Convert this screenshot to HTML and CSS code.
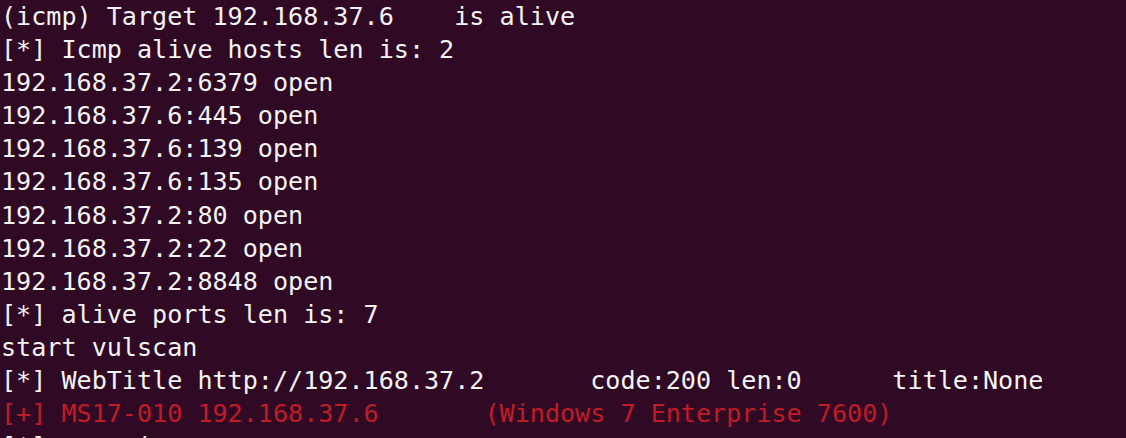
FILE: index.html
```html
<!DOCTYPE html>
<html lang="en">
<head>
<meta charset="utf-8">
<title>Terminal</title>
<link rel="stylesheet" href="styles.css">
</head>
<body>
<main class="terminal">
<div class="line">(icmp) Target 192.168.37.6    is alive</div>
<div class="line">[*] Icmp alive hosts len is: 2</div>
<div class="line">192.168.37.2:6379 open</div>
<div class="line">192.168.37.6:445 open</div>
<div class="line">192.168.37.6:139 open</div>
<div class="line">192.168.37.6:135 open</div>
<div class="line">192.168.37.2:80 open</div>
<div class="line">192.168.37.2:22 open</div>
<div class="line">192.168.37.2:8848 open</div>
<div class="line">[*] alive ports len is: 7</div>
<div class="line">start vulscan</div>
<div class="line">[*] WebTitle http://192.168.37.2       code:200 len:0      title:None</div>
<div class="line red">[+] MS17-010 192.168.37.6       (Windows 7 Enterprise 7600)</div>
<div class="line">[*] scan is over</div>
</main>
</body>
</html>
```
FILE: styles.css
```css
html, body {
  margin: 0;
  padding: 0;
  background: #300a24;
  overflow: hidden;
}
.terminal {
  width: 1126px;
  height: 438px;
  overflow: hidden;
  padding: 0 0 0 1px;
  box-sizing: border-box;
  font-family: "DejaVu Sans Mono", "Liberation Mono", monospace;
  font-size: 25.1px;
  line-height: 33.1px;
  color: #f4f4f4;
}
.line {
  white-space: pre;
  height: 33.1px;
}
.red {
  color: #c01c28;
}
```
